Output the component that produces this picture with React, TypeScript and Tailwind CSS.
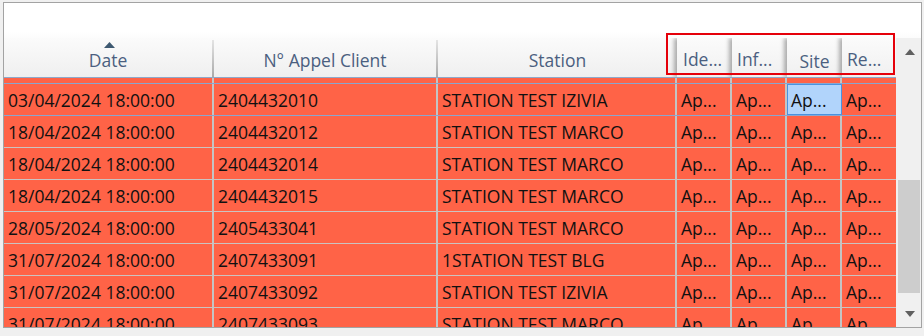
import React from "react";

const rows: [string, string, string][] = [
  ["03/04/2024 18:00:00", "2404432010", "STATION TEST IZIVIA"],
  ["18/04/2024 18:00:00", "2404432012", "STATION TEST MARCO"],
  ["18/04/2024 18:00:00", "2404432014", "STATION TEST MARCO"],
  ["18/04/2024 18:00:00", "2404432015", "STATION TEST MARCO"],
  ["28/05/2024 18:00:00", "2405433041", "STATION TEST MARCO"],
  ["31/07/2024 18:00:00", "2407433091", "1STATION TEST BLG"],
  ["31/07/2024 18:00:00", "2407433092", "STATION TEST IZIVIA"],
  ["31/07/2024 18:00:00", "2407433093", "STATION TEST MARCO"],
];

const cellBase = "flex items-center pl-[4px] pt-[2px] border-r-2 border-[#c4c4c4] whitespace-nowrap overflow-hidden";

function Row({ r, idx }: { r: [string, string, string]; idx: number }) {
  const first = idx === 0;
  return (
    <div
      className={
        "flex h-[32px] shrink-0 bg-[#ff6347] border-b " +
        (first ? "border-[#8aa6cf]" : "border-[#cbc3c1]")
      }
    >
      <div className={cellBase + " w-[210px]"}>{r[0]}</div>
      <div className={cellBase + " w-[224px]"}>{r[1]}</div>
      <div className={cellBase + " w-[239px]"}>{r[2]}</div>
      <div className={cellBase + " w-[55px]"}>Ap...</div>
      <div className={cellBase + " w-[55px]"}>Ap...</div>
      {first ? (
        <div className="flex items-center pl-[4px] pt-[2px] w-[55px] bg-[#b1d4fb] shadow-[inset_0_0_0_1px_#4a93e0] whitespace-nowrap overflow-hidden">
          Ap...
        </div>
      ) : (
        <div className={cellBase + " w-[55px]"}>Ap...</div>
      )}
      <div className="flex items-center pl-[4px] pt-[2px] w-[54px] whitespace-nowrap overflow-hidden">Ap...</div>
    </div>
  );
}

function Sep() {
  return <div className="w-[2px] shrink-0 self-stretch mt-[2px] bg-[linear-gradient(to_bottom,#e4e4e4,#a9a9a9)]" />;
}

export default function App() {
  return (
    <div className="w-[924px] h-[336px] bg-[#f0f0f0] pl-[3px] pt-[2px] font-['Open_Sans',sans-serif] text-[17.5px] text-[#111] relative overflow-hidden">
      <div className="w-[919px] h-[326px] border border-[#a3a3a3] bg-white flex flex-col overflow-hidden">
        <div className="h-[35px] shrink-0 bg-[linear-gradient(to_bottom,#ffffff_80%,#fcfcfc)]" />
        <div className="flex flex-1 min-h-0">
          {/* main grid */}
          <div className="w-[892px] flex flex-col min-h-0 overflow-hidden">
            {/* header */}
            <div className="h-[39px] shrink-0 flex bg-[linear-gradient(to_bottom,#fbfbfb,#efefef)] text-[#4b5f80]">
              <div className="w-[208px] relative flex justify-center items-end pb-[4px]">
                <svg className="absolute left-[100px] top-[4px]" width="11" height="6" viewBox="0 0 11 6">
                  <polygon points="0,6 5.5,0 11,6" fill="#3e5971" />
                </svg>
                Date
              </div>
              <Sep />
              <div className="w-[222px] flex justify-center items-end pb-[4px]">N° Appel Client</div>
              <Sep />
              <div className="w-[239px] flex justify-center items-end pb-[4px]">Station</div>
              <div className="w-[55px] flex items-end pl-[6px] pb-[5px] bg-[linear-gradient(to_bottom,#fbfbfb,#f0f0f0)] shadow-[-3px_0_4px_rgba(0,0,0,0.3)] whitespace-nowrap overflow-hidden">Ide...</div>
              <div className="w-[55px] flex items-end pl-[5px] pb-[5px] bg-[linear-gradient(to_bottom,#fbfbfb,#f0f0f0)] shadow-[-3px_0_4px_rgba(0,0,0,0.3)] whitespace-nowrap overflow-hidden">Inf...</div>
              <div className="w-[55px] flex items-end justify-center pb-[3px] bg-[linear-gradient(to_bottom,#fbfbfb,#f0f0f0)] shadow-[-3px_0_4px_rgba(0,0,0,0.3)] whitespace-nowrap overflow-hidden">Site</div>
              <div className="w-[54px] flex items-end pl-[5px] pb-[5px] bg-[linear-gradient(to_bottom,#fbfbfb,#f0f0f0)] shadow-[-3px_0_4px_rgba(0,0,0,0.3)] whitespace-nowrap overflow-hidden">Re...</div>
            </div>
            <div className="h-[1px] shrink-0 bg-[#8ea8c9]" />
            {/* partial row */}
            <div className="flex h-[6px] shrink-0 bg-[#ff6347] border-b border-[#8aa6cf]">
              <div className="w-[210px] border-r-2 border-[#c4c4c4]" />
              <div className="w-[224px] border-r-2 border-[#c4c4c4]" />
              <div className="w-[239px] border-r-2 border-[#c4c4c4]" />
              <div className="w-[55px] border-r-2 border-[#c4c4c4]" />
              <div className="w-[55px] border-r-2 border-[#c4c4c4]" />
              <div className="w-[55px] border-r-2 border-[#c4c4c4]" />
              <div className="w-[54px]" />
            </div>
            {rows.map((r, i) => (
              <Row key={i} r={r} idx={i} />
            ))}
          </div>
          {/* scrollbar */}
          <div className="w-[25px] bg-[#f0f0f0] flex flex-col">
            <div className="h-[28px] shrink-0 flex items-center justify-center pl-[2px]">
              <svg width="10" height="6" viewBox="0 0 10 6">
                <polygon points="0,6 5,0 10,6" fill="#606060" />
              </svg>
            </div>
            <div className="h-[114px] shrink-0" />
            <div className="h-[113px] shrink-0 ml-[2px] mr-[1px] bg-[#cdcdcd]" />
            <div className="flex-1" />
            <div className="h-[26px] shrink-0 flex items-center justify-center pl-[2px]">
              <svg width="10" height="6" viewBox="0 0 10 6">
                <polygon points="0,0 10,0 5,6" fill="#606060" />
              </svg>
            </div>
          </div>
        </div>
      </div>
      {/* highlight box */}
      <div className="absolute left-[666px] top-[33px] w-[229px] h-[42px] border-2 border-[#e5000a] pointer-events-none" />
    </div>
  );
}
